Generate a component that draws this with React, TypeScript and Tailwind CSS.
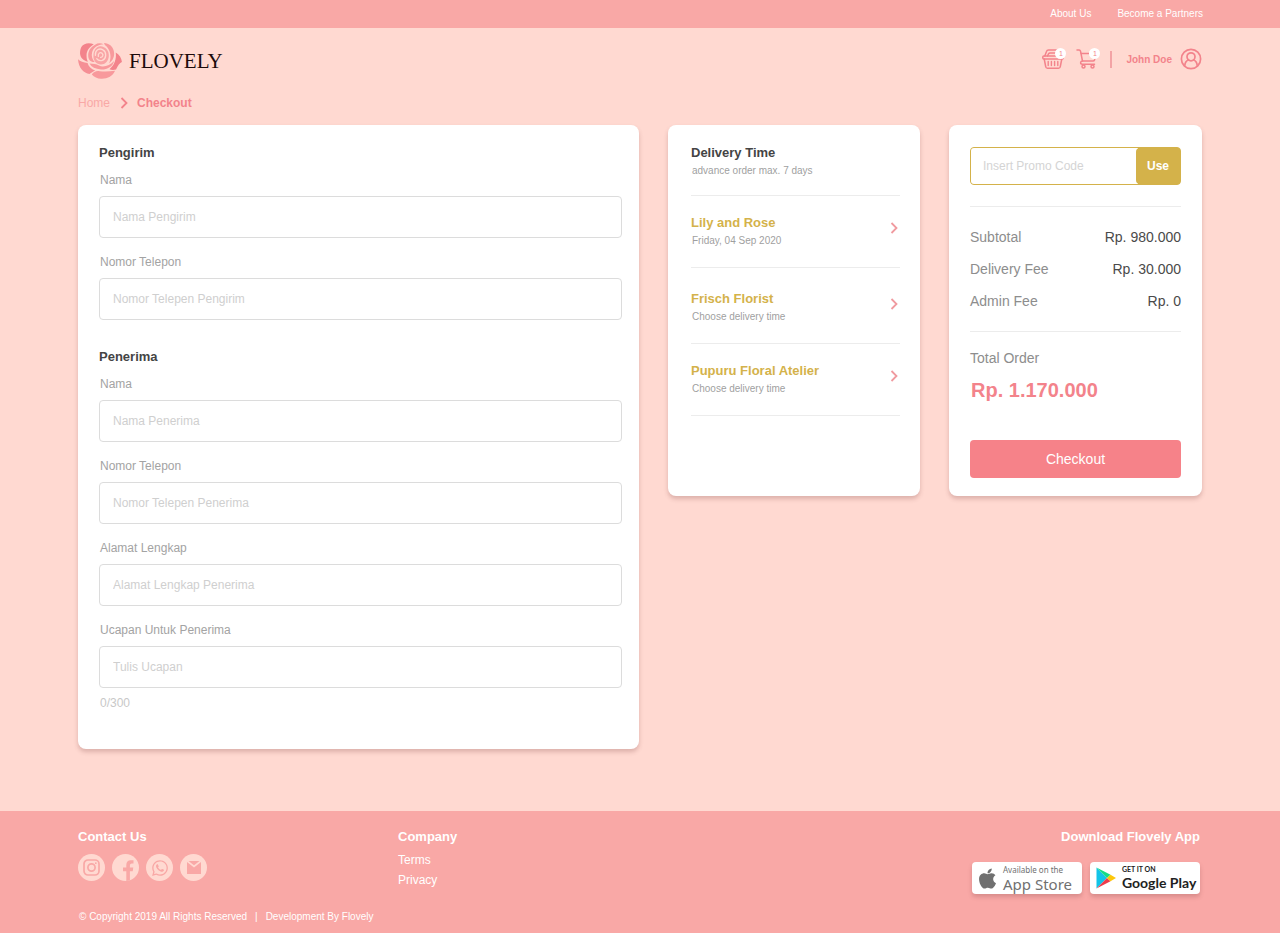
import { useState } from "react";
import { FaApple, FaWhatsapp } from "react-icons/fa";

const CARD = "rounded-lg bg-white shadow-[0_3px_4px_rgba(120,60,60,0.25)]";

function RoseLogo() {
  return (
    <svg viewBox="24 38 134 110" className="h-9 w-11" aria-hidden="true">
      <g fill="#f3838b">
        <path d="M34 50C42 38 58 36 72 42C56 52 49 64 50 78C50 86 51 90 54 95C40 92 31 83 30 70C30 62 31 56 34 50Z" />
        <path d="M139 67C150 73 157 84 158 96C151 98 146 107 140 119C133 121 126 121 120 118C135 106 142 87 139 67Z" />
      </g>
      <path d="M24 88C30 95 41 98 53 99C56 110 64 117 76 122C68 126 63 130 59 133C41 130 25 114 24 88Z" fill="#f58f95" />
      <g fill="#f8999c">
        <path d="M76 43C84 38 94 38 102 42C84 44 71 51 67 66C64 77 67 88 75 96C62 97 55 89 55 77C54 62 63 50 76 43Z" />
        <path d="M103 38C119 39 130 48 133 62C137 77 131 92 119 100C127 82 124 58 106 44Z" />
        <path d="M59 101C70 103 80 101 88 107C101 114 122 107 134 93C130 111 112 120 94 119C77 118 65 112 59 101Z" />
        <path d="M66 134C71 126 80 122 90 124C105 126 121 125 137 123C130 140 113 148 94 147C83 147 73 142 66 134Z" />
      </g>
      <path d="M92 48C108 49 119 62 118 78C117 94 106 104 94 104C80 103 70 92 71 77C71 60 80 49 92 48Z" fill="#f9a4a5" />
      <g fill="none" stroke="#ffd9d1" strokeWidth="4" strokeLinecap="round">
        <path d="M77 76C75 60 89 52 100 59C112 66 111 86 98 91C91 93 84 90 81 86" />
        <path d="M86 79C84 70 91 65 97 69C103 74 99 82 93 82" />
      </g>
    </svg>
  );
}

function BasketIcon() {
  return (
    <svg viewBox="0 0 22 20" className="h-5 w-[22px]" fill="none" stroke="#f3838b" strokeWidth="1.5" strokeLinecap="round" strokeLinejoin="round" aria-hidden="true">
      <path d="M2.800 7L4.500 2.500Q5 1 6.500 1H16Q18 1 19 3L20 7" />
      <path d="M5.500 7L6.500 4.800Q7 4 8 4H15" />
      <rect x="0.800" y="7" width="20.400" height="3" rx="1" />
      <path d="M2.200 10L3.800 18Q4 19.200 5.500 19.200H16.500Q18 19.200 18.200 18L19.800 10" />
      <path d="M6.200 12.500V16.500M9.400 12.500V16.500M12.600 12.500V16.500M15.800 12.500V16.500" strokeWidth="1.400" />
    </svg>
  );
}

function CartIcon() {
  return (
    <svg viewBox="0 0 22 20" className="h-5 w-[22px]" fill="none" stroke="#f3838b" strokeWidth="1.5" strokeLinecap="round" strokeLinejoin="round" aria-hidden="true">
      <path d="M1 1H3.200Q4.200 1 4.500 2.200L6.500 12H17Q18.200 12 18.500 11L20 5" />
      <path d="M5.200 4.500H18" />
      <path d="M6.500 12Q4.600 12.300 4.600 13.800Q4.600 15.300 6.500 15.300H18.500" />
      <circle cx="7.500" cy="17.600" r="1.500" />
      <circle cx="16.500" cy="17.600" r="1.500" />
    </svg>
  );
}

function UserIcon() {
  return (
    <svg viewBox="0 0 22 22" className="h-[22px] w-[22px]" fill="none" stroke="#f3838b" strokeWidth="1.7" strokeLinecap="round" aria-hidden="true">
      <circle cx="11" cy="11" r="9.600" />
      <circle cx="11" cy="8.800" r="4" />
      <path d="M4.800 17.500C5 14.500 6.500 12.800 8.500 11.800M17.200 17.500C17 14.500 15.500 12.800 13.500 11.800" />
    </svg>
  );
}

function Chevron({ className }: { className: string }) {
  return (
    <svg viewBox="0 0 8 12" className={className} fill="none" stroke="currentColor" strokeWidth="1.800" aria-hidden="true">
      <path d="M1.500 1L6.500 6L1.500 11" />
    </svg>
  );
}

function InstagramIcon() {
  return (
    <svg viewBox="0 0 27 27" className="h-[27px] w-[27px]" fill="none" stroke="#f9a8a6" strokeWidth="1.7" aria-hidden="true">
      <rect x="6" y="6" width="15" height="15" rx="4" />
      <circle cx="13.500" cy="13.500" r="3.600" />
      <circle cx="17.800" cy="9.200" r="0.900" fill="#f9a8a6" stroke="none" />
    </svg>
  );
}

function FacebookIcon() {
  return (
    <svg viewBox="0 0 27 27" className="h-[27px] w-[27px]" aria-hidden="true">
      <path d="M14.300 27V17.300H11V13.600H14.300V11Q14.300 6.200 18.800 6.200H21.500V9.500H19.800Q17.900 9.500 17.900 11.400V13.600H21.300L20.700 17.300H17.900V27Z" fill="#f9a8a6" />
    </svg>
  );
}

function MailIcon() {
  return (
    <svg viewBox="0 0 14 13" className="h-[13px] w-3.5" aria-hidden="true">
      <path d="M1.500 0H12.500L7 4.300Z" fill="#f9a8a6" />
      <path d="M0 1L7 6.500L14 1V13H0Z" fill="#f9a8a6" />
    </svg>
  );
}

function PlayLogo() {
  return (
    <svg viewBox="0 0 20 22" className="h-[22px] w-5 shrink-0" aria-hidden="true">
      <path d="M0.500 0.500V21.500L11 11Z" fill="#12c4e8" />
      <path d="M0.500 0.500L14.500 7.700L11 11Z" fill="#15dc86" />
      <path d="M0.500 21.500L14.500 14.300L11 11Z" fill="#ee3b4b" />
      <path d="M14.500 7.700L20 11L14.500 14.300L11 11Z" fill="#fdc70b" />
    </svg>
  );
}

function IconCount({ label, count, children }: { label: string; count: number; children: React.ReactNode }) {
  return (
    <button type="button" aria-label={label} className="relative flex">
      {children}
      <span className="absolute -top-px -right-0.5 flex h-[11px] w-[11px] items-center justify-center rounded-full bg-white text-[7px] leading-none text-[#f3838b]">
        {count}
      </span>
    </button>
  );
}

function Field({ id, label, placeholder }: { id: string; label: string; placeholder: string }) {
  return (
    <div>
      <label htmlFor={id} className="mb-1.5 block pl-px text-xs leading-5 text-[#a3a3a3]">
        {label}
      </label>
      <input
        id={id}
        type="text"
        placeholder={placeholder}
        className="block h-[42px] w-full rounded border border-[#dcdcdc] bg-white px-[13px] text-xs text-[#444] outline-none placeholder:text-[#cfcfcf]"
      />
    </div>
  );
}

const shops = [
  { name: "Lily and Rose", note: "Friday, 04 Sep 2020", pad: "pt-[17px]" },
  { name: "Frisch Florist", note: "Choose delivery time", pad: "pt-[21px]" },
  { name: "Pupuru Floral Atelier", note: "Choose delivery time", pad: "pt-[17px]" },
];

const fees = [
  { label: "Subtotal", value: "Rp. 980.000" },
  { label: "Delivery Fee", value: "Rp. 30.000" },
  { label: "Admin Fee", value: "Rp. 0" },
];

const socials = [
  { label: "Instagram", icon: <InstagramIcon /> },
  { label: "Facebook", icon: <FacebookIcon /> },
  { label: "WhatsApp", icon: <FaWhatsapp size={18} /> },
  { label: "Email", icon: <MailIcon /> },
];

export default function App() {
  const [promo, setPromo] = useState("");

  return (
    <div className="flex min-h-screen flex-col bg-[#ffd9d1] font-['Liberation_Sans',Arial,sans-serif]">
      <nav className="flex h-7 items-center justify-end gap-[26px] bg-[#f9a8a6] px-[77px] pb-0.5 text-[10px] text-white">
        <a href="#about">About Us</a>
        <a href="#partners">Become a Partners</a>
      </nav>

      <header className="flex items-center justify-between px-[78px] pt-[15px]">
        <a href="#home" className="flex items-center gap-[7px]">
          <RoseLogo />
          <span className="font-['Liberation_Serif',serif] text-[21px] leading-8 text-[#1c0a0a]">FLOVELY</span>
        </a>
        <div className="flex items-center pb-1">
          <IconCount label="Basket" count={1}>
            <BasketIcon />
          </IconCount>
          <span className="w-3" />
          <IconCount label="Cart" count={1}>
            <CartIcon />
          </IconCount>
          <span className="mr-3.5 ml-3 h-[17px] w-0.5 bg-[#f3a3a5]" />
          <a href="#account" className="flex items-center gap-2 text-[10px] font-bold text-[#f3838b]">
            John Doe
            <UserIcon />
          </a>
        </div>
      </header>

      <div className="flex items-center px-[78px] pt-3.5 text-xs leading-5">
        <a href="#home" className="text-[#f9a8a6]">
          Home
        </a>
        <Chevron className="mr-[9px] ml-2.5 h-3 w-2 text-[#f3838b]" />
        <span className="font-bold text-[#f3838b]">Checkout</span>
      </div>

      <main className="grid flex-1 grid-cols-[minmax(0,561fr)_minmax(0,252fr)_minmax(0,253fr)] items-start gap-[29px] px-[78px] pt-3 pb-[62px]">
        <form className={`${CARD} pt-[18px] pr-[17px] pb-9 pl-[21px]`}>
          <section>
            <h2 className="mb-[7px] text-[13px] leading-5 font-bold text-[#444]">Pengirim</h2>
            <div className="flex flex-col gap-3.5">
              <Field id="sender-name" label="Nama" placeholder="Nama Pengirim" />
              <Field id="sender-phone" label="Nomor Telepon" placeholder="Nomor Telepen Pengirim" />
            </div>
          </section>
          <section className="mt-[27px]">
            <h2 className="mb-[7px] text-[13px] leading-5 font-bold text-[#444]">Penerima</h2>
            <div className="flex flex-col gap-3.5">
              <Field id="receiver-name" label="Nama" placeholder="Nama Penerima" />
              <Field id="receiver-phone" label="Nomor Telepon" placeholder="Nomor Telepen Penerima" />
              <Field id="receiver-address" label="Alamat Lengkap" placeholder="Alamat Lengkap Penerima" />
              <Field id="message" label="Ucapan Untuk Penerima" placeholder="Tulis Ucapan" />
            </div>
          </section>
          <p className="mt-[5px] pl-px text-xs leading-5 text-[#c8c8c8]">0/300</p>
        </form>

        <section className={`${CARD} min-h-[371px] pt-[18px] pr-5 pl-[23px]`}>
          <h2 className="text-[13px] leading-5 font-bold text-[#444]">Delivery Time</h2>
          <p className="border-b border-[#ececec] pb-4 pl-px text-[10px] leading-4 text-[#9f9f9f]">advance order max. 7 days</p>
          <ul>
            {shops.map((shop) => (
              <li key={shop.name} className="border-b border-[#ececec]">
                <button type="button" className={`flex w-full items-center justify-between pr-0.5 pb-[18px] text-left ${shop.pad}`}>
                  <span>
                    <span className="block text-[13px] leading-5 font-bold text-[#d4b24a]">{shop.name}</span>
                    <span className="block pl-px text-[10px] leading-4 text-[#9f9f9f]">{shop.note}</span>
                  </span>
                  <Chevron className="mb-1.5 h-3 w-2 text-[#f09a9f]" />
                </button>
              </li>
            ))}
          </ul>
        </section>

        <section className={`${CARD} px-[21px] pt-[22px] pb-[18px]`}>
          <div className="flex h-[38px] rounded border border-[#d4b24a] bg-[#d4b24a]">
            <input
              type="text"
              aria-label="Promo code"
              placeholder="Insert Promo Code"
              value={promo}
              onChange={(event) => setPromo(event.target.value)}
              className="min-w-0 flex-1 rounded-l-[3px] bg-white px-3 text-xs text-[#444] outline-none placeholder:text-[#d4d4d4]"
            />
            <button type="button" className="-ml-0.5 w-11 shrink-0 rounded bg-[#d4b24a] text-xs font-bold text-white">
              Use
            </button>
          </div>
          <dl className="mt-[21px] flex flex-col gap-3 border-y border-[#ececec] py-5">
            {fees.map((fee) => (
              <div key={fee.label} className="flex justify-between text-sm leading-5">
                <dt className="text-[#8d8d8d]">{fee.label}</dt>
                <dd className="text-[#4a4a4a]">{fee.value}</dd>
              </div>
            ))}
          </dl>
          <p className="mt-4 text-sm leading-5 text-[#8d8d8d]">Total Order</p>
          <p className="mt-2 pl-px text-xl leading-7 font-bold text-[#f3838b]">Rp. 1.170.000</p>
          <button type="button" className="mt-9 h-[38px] w-full rounded bg-[#f68289] text-sm text-white">
            Checkout
          </button>
        </section>
      </main>

      <footer className="bg-[#f9a8a6] pt-4 pr-20 pb-1.5 pl-[78px] text-white">
        <div className="grid h-20 grid-cols-[320px_1fr_auto]">
          <section>
            <h2 className="text-[13px] leading-5 font-bold">Contact Us</h2>
            <div className="mt-[7px] flex gap-[7px]">
              {socials.map((social) => (
                <a key={social.label} href="#contact" aria-label={social.label} className="flex h-[27px] w-[27px] items-center justify-center overflow-hidden rounded-full bg-[#ffd9d1] text-[#f9a8a6]">
                  {social.icon}
                </a>
              ))}
            </div>
          </section>
          <section>
            <h2 className="text-[13px] leading-5 font-bold">Company</h2>
            <ul className="mt-[3px] text-xs leading-5">
              <li>
                <a href="#terms">Terms</a>
              </li>
              <li>
                <a href="#privacy">Privacy</a>
              </li>
            </ul>
          </section>
          <section>
            <h2 className="text-right text-[13px] leading-5 font-bold">Download Flovely App</h2>
            <div className="mt-[15px] flex gap-2">
              <a href="#app-store" className="flex h-8 w-[110px] items-center gap-1 rounded bg-white pl-1 text-[#707070] shadow-[0_3px_4px_rgba(120,60,60,0.25)]">
                <FaApple size={23} />
                <span className="flex flex-col font-['Noto_Sans',sans-serif]">
                  <span className="text-[8px] leading-[11px]">Available on the</span>
                  <span className="text-[15px] leading-[18px]">App Store</span>
                </span>
              </a>
              <a href="#google-play" className="flex h-8 w-[110px] items-center gap-1.5 rounded bg-white pl-1.5 text-[#222] shadow-[0_3px_4px_rgba(120,60,60,0.25)]">
                <PlayLogo />
                <span className="flex flex-col font-[Lato,sans-serif] whitespace-nowrap">
                  <span className="text-[7px] leading-[9px] font-bold">GET IT ON</span>
                  <span className="text-sm leading-[18px] font-bold">Google Play</span>
                </span>
              </a>
            </div>
          </section>
        </div>
        <p className="flex gap-2 pl-px text-[10px] leading-5">
          <span>© Copyright 2019 All Rights Reserved</span>
          <span>|</span>
          <span>Development By Flovely</span>
        </p>
      </footer>
    </div>
  );
}
